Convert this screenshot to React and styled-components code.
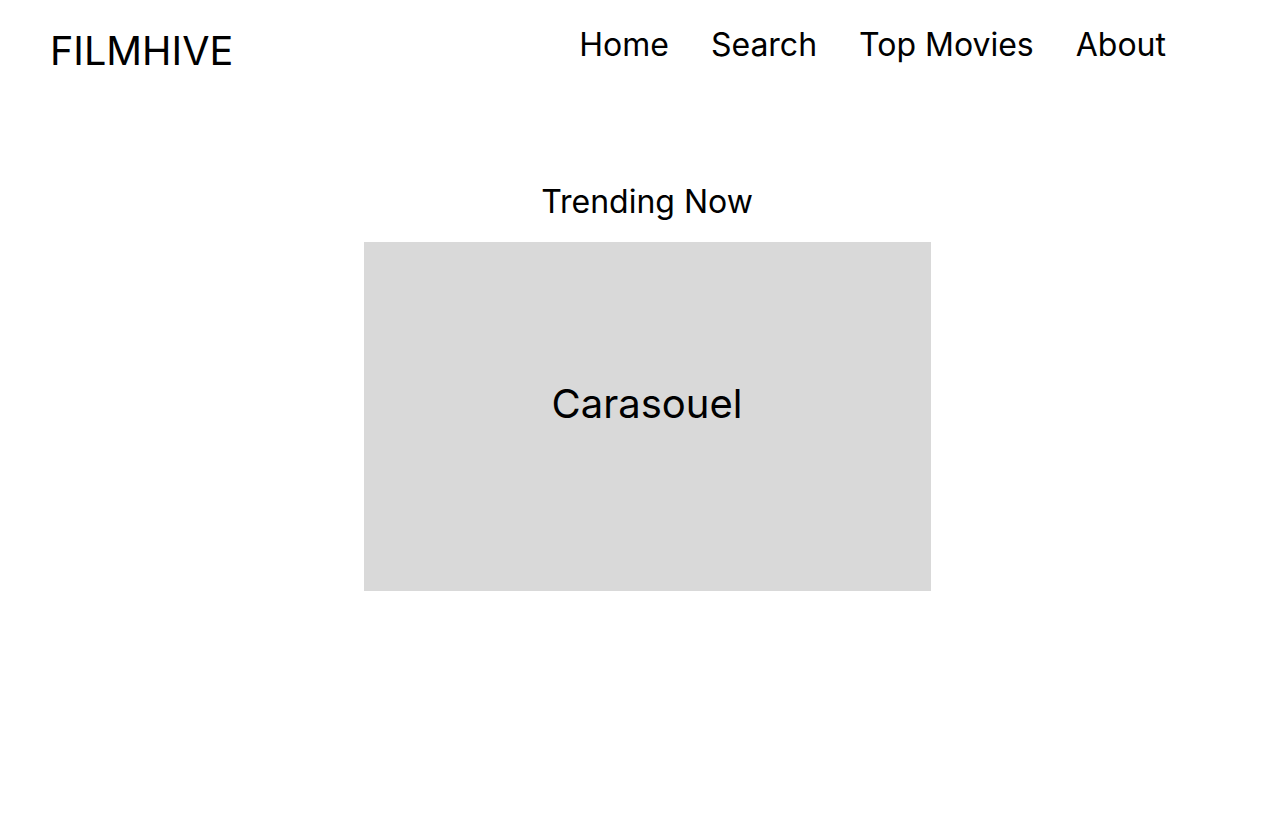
import React from 'react'
import styled, { createGlobalStyle } from 'styled-components'

const GlobalStyle = createGlobalStyle`
body {
    margin: 0;
    background: #ffffff;
    font-family: Inter, "Noto Sans", sans-serif;
    color: #000000;
}
`

const Page = styled.div`
min-height: 832px;
display: flex;
flex-direction: column;
`

const Header = styled.header`
display: flex;
justify-content: space-between;
align-items: flex-start;
padding: 24px 114px 0 50px;
`

const Logo = styled.h1`
margin: 3px 0 0 0;
font-size: 39.6px;
font-weight: 400;
line-height: 48px;
`

const Nav = styled.nav`
display: flex;
gap: 42px;
`

const NavLink = styled.a`
font-size: 32px;
line-height: 42px;
color: #000000;
text-decoration: none;
cursor: pointer;
`

const Trending = styled.section`
display: flex;
flex-direction: column;
align-items: center;
margin-top: 107px;
padding-left: 14px;
`

const SectionTitle = styled.h2`
margin: 0 0 20px 0;
font-size: 32px;
font-weight: 400;
line-height: 40px;
`

const Carousel = styled.div`
width: 567px;
height: 349px;
background: #d9d9d9;
display: flex;
justify-content: center;
padding-top: 138px;
box-sizing: border-box;
font-size: 40px;
line-height: 48px;
`

const App = () => {
    return (
        <Page>
            <GlobalStyle />
            <Header>
                <Logo>FILMHIVE</Logo>
                <Nav>
                    <NavLink>Home</NavLink>
                    <NavLink>Search</NavLink>
                    <NavLink>Top Movies</NavLink>
                    <NavLink>About</NavLink>
                </Nav>
            </Header>
            <Trending>
                <SectionTitle>Trending Now</SectionTitle>
                <Carousel>Carasouel</Carousel>
            </Trending>
        </Page>
    )
}

export default App
